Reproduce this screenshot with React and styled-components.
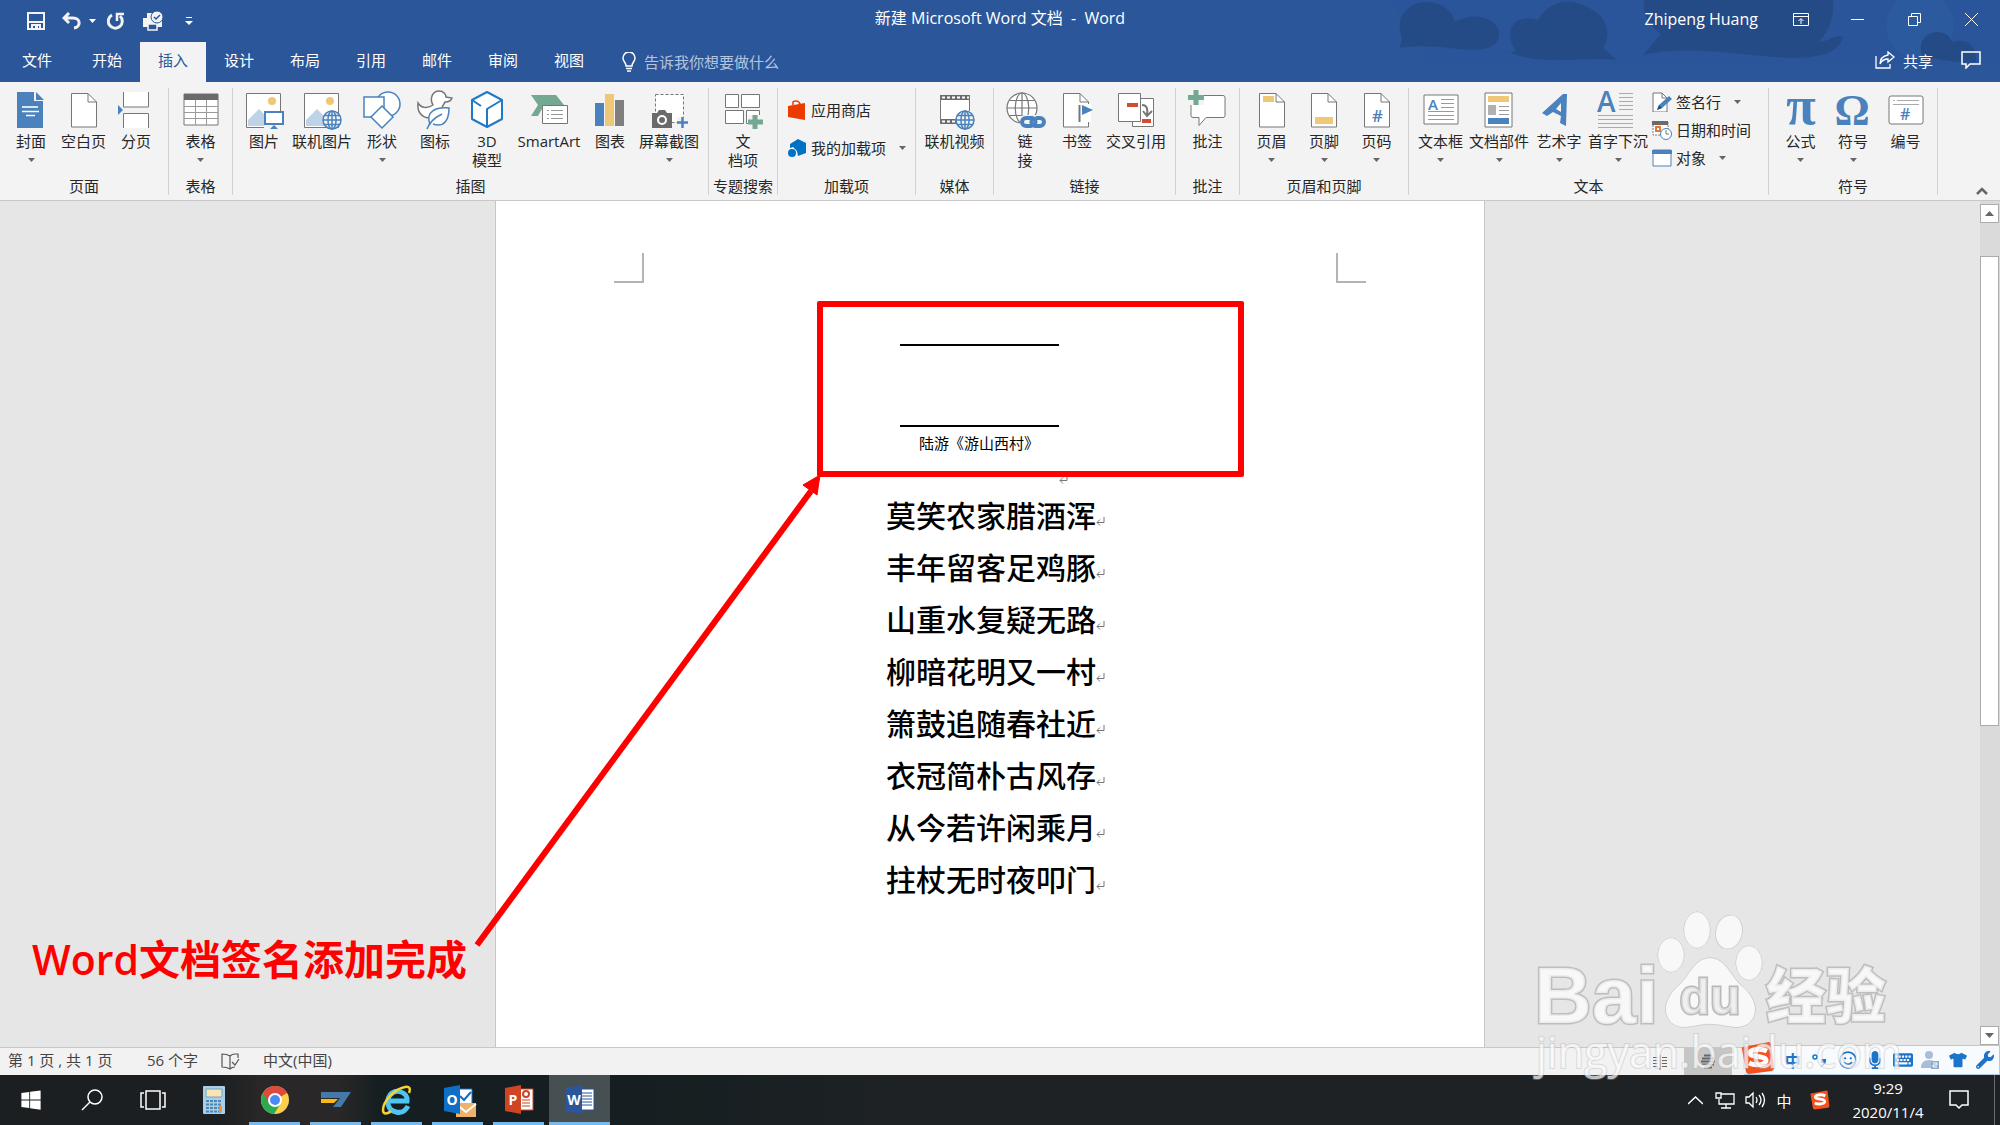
import React, { Component } from 'react'
import styled, { createGlobalStyle, css } from 'styled-components'
import { FaWindows, FaTshirt, FaWrench, FaMicrophone, FaRegSmile, FaKeyboard } from 'react-icons/fa'

const BLUE = '#2b579a'
const ICON_BLUE = '#4a82bd'
const GREY = '#767676'
const GREEN = '#74a892'
const SAND = '#efc877'

const GlobalStyle = createGlobalStyle`
  * { box-sizing: border-box; }

  body {
    margin: 0;
    font-family: 'Open Sans', 'Noto Sans CJK SC', sans-serif;
    font-size: 15px;
    color: #262626;
    background: #e6e6e6;
  }

  button, input {
    padding: 0;
    border: 0;
    background: none;
    color: inherit;
    font: inherit;
  }

  h1, p { margin: 0; }

  svg { display: block; flex: none; }
`

const Window = styled.div`
  position: relative;
  display: flex;
  flex-direction: column;
  min-height: 100vh;
  overflow: hidden;
`

/* title bar and tabs */

const Header = styled.header`
  position: relative;
  background: ${BLUE};
  color: white;
`

const Clouds = styled.svg`
  position: absolute;
  top: 0;
  right: 0;
`

const TitleBar = styled.div`
  position: relative;
  display: grid;
  grid-template-columns: 1fr auto 1fr;
  height: 42px;
`

const QuickAccess = styled.div`
  display: flex;
  align-items: center;
  gap: 8px;
  padding-left: 24px;
`

const QuickButton = styled.button`
  display: flex;
  align-items: center;
  justify-content: center;
  gap: 8px;
  height: 32px;
  min-width: 24px;
  margin-right: ${p => p.$space || 0}px;
`

const Title = styled.h1`
  font-size: 16px;
  font-weight: 400;
  line-height: 36px;
  white-space: pre;
`

const WindowControls = styled.div`
  display: flex;
  justify-content: flex-end;
  height: 38px;
`

const UserName = styled.button`
  margin-right: 14px;
  font-size: 16px;
  line-height: 36px;
`

const ControlButton = styled.button`
  display: flex;
  align-items: center;
  justify-content: center;
  width: 57px;
`

const TabBar = styled.nav`
  position: relative;
  display: flex;
  height: 40px;
`

const Tab = styled.button`
  height: 40px;
  width: ${p => p.$first ? 74 : 66}px;
  padding-bottom: 4px;
  line-height: 36px;

  ${p => p.$active && css`
    background: #f3f3f3;
    color: ${BLUE};
  `}
`

const TellMe = styled.label`
  display: flex;
  align-items: center;
  gap: 8px;
  margin-left: 20px;
`

const TellMeInput = styled.input`
  width: 200px;
  outline: none;

  &::placeholder {
    color: #b5c5df;
    opacity: 1;
  }
`

const ShareTools = styled.div`
  display: flex;
  align-items: center;
  gap: 28px;
  height: 36px;
  margin-left: auto;
  padding-right: 19px;
`

const ShareButton = styled.button`
  display: flex;
  align-items: center;
  gap: 8px;
`

/* ribbon */

const Ribbon = styled.section`
  position: relative;
  display: flex;
  padding: 6px 0 5px;
  border-bottom: 1px solid #c8c8c8;
  background: #f3f3f3;
`

const Group = styled.div`
  display: flex;
  flex-direction: column;
  width: ${p => p.$width}px;
  height: 107px;
  border-right: 1px solid #d2d2d2;
`

const GroupBody = styled.div`
  display: flex;
  height: 90px;
  padding-left: ${p => p.$center ? 0 : 5}px;
  justify-content: ${p => p.$center ? 'center' : 'flex-start'};
`

const GroupLabel = styled.span`
  line-height: 16px;
  text-align: center;
  white-space: nowrap;
`

const BigButton = styled.button`
  display: flex;
  flex-direction: column;
  align-items: center;
  width: ${p => p.$width}px;
  height: 86px;
  padding-top: 1px;
  white-space: pre;
  line-height: 19px;

  > svg:first-child { margin-bottom: 3px; overflow: visible; }
  > svg:last-child { margin-top: 7px; }
`

const SmallButtons = styled.div`
  display: flex;
  flex-direction: column;
  padding: ${p => p.$loose ? '7px 0 0 4px' : '0 0 0 3px'};
  gap: ${p => p.$loose ? 9 : 0}px;
`

const SmallButton = styled.button`
  display: flex;
  align-items: center;
  height: ${p => p.$loose ? 29 : 28}px;
  gap: 4px;
  white-space: nowrap;
  line-height: 20px;

  > svg:last-child { margin-left: 9px; }
`

const Collapse = styled.button`
  align-self: flex-end;
  margin: 0 12px 0 auto;
`

/* document */

const Workspace = styled.main`
  position: relative;
  display: flex;
  flex: 1;
`

const Canvas = styled.div`
  display: flex;
  flex: 1;
  justify-content: center;
`

const Page = styled.article`
  position: relative;
  width: 990px;
  border: solid #c6c6c6;
  border-width: 0 1px;
  background: white;
  color: black;
`

const Corners = styled.div`
  display: flex;
  justify-content: space-between;
  padding: 52px 118px 0;
`

const Corner = styled.div`
  width: 30px;
  height: 30px;
  border: solid #b4b4b4;
  border-width: ${p => p.$right ? '0 0 2px 2px' : '0 2px 2px 0'};
`

const PageText = styled.div`
  width: 218px;
  margin: 61px auto 0 390px;
`

const Signature = styled.div`
  display: flex;
  align-items: flex-end;
  height: 146px;
  margin-left: 14px;

  > svg { margin-bottom: 6px; }
`

const SignatureBox = styled.div`
  width: 159px;
  height: 146px;
  border-top: 2px solid black;
`

const Signer = styled.p`
  margin-top: 79px;
  padding-left: 19px;
  border-top: 2px solid black;
  line-height: 32px;
`

const Verse = styled.p`
  display: flex;
  align-items: center;
  font-size: 30px;
  font-weight: 500;
  line-height: 52px;
  white-space: nowrap;

  svg { margin-top: 10px; }
`

const RedBox = styled.div`
  position: absolute;
  top: 100px;
  left: 321px;
  width: 427px;
  height: 176px;
  border: 6px solid red;
  border-radius: 2px;
`

const Arrow = styled.svg`
  position: absolute;
  top: 270px;
  left: 470px;
`

const Caption = styled.p`
  position: absolute;
  top: 728px;
  left: 32px;
  color: red;
  font-size: 41px;
  font-weight: 600;
  line-height: 60px;
`

const ScrollBar = styled.div`
  display: flex;
  flex-direction: column;
  width: 20px;
  padding: 3px 1px 2px 0;
  background: #dadada;
`

const ScrollButton = styled.button`
  display: flex;
  align-items: center;
  justify-content: center;
  height: 19px;
  border: 1px solid #ababab;
  background: white;
`

const ScrollTrack = styled.div`
  flex: 1;
  padding-top: 33px;
`

const ScrollThumb = styled.div`
  height: 61%;
  border: 1px solid #ababab;
  background: white;
`

/* status bar and taskbar */

const StatusBar = styled.footer`
  position: relative;
  display: flex;
  align-items: center;
  gap: 23px;
  height: 28px;
  padding-left: 8px;
  border-top: 1px solid #c8c8c8;
  background: #f2f2f2;
  color: #444;
`

const StatusText = styled.span`
  height: 28px;
  line-height: 24px;
  min-width: ${p => p.$wide ? 116 : 0}px;
`

const Views = styled.div`
  display: flex;
  align-self: stretch;
  margin-left: auto;
  margin-right: 268px;
`

const ViewButton = styled.button`
  display: flex;
  align-items: center;
  justify-content: center;
  width: 48px;
  background: ${p => p.$active ? '#c6c6c6' : 'none'};
`

const ImeBar = styled.div`
  position: absolute;
  right: 0;
  bottom: 0;
  display: flex;
  align-items: center;
  width: 256px;
  height: 30px;
  padding-left: 35px;
  border: 1px solid #b0cbe6;
  border-left: 0;
  background: linear-gradient(90deg, transparent 16px, #f8fbfe 16px);
  color: #1b74c9;
`

const ImeLogo = styled.span`
  position: absolute;
  left: -3px;
  bottom: -1px;
`

const ImeButton = styled.button`
  display: flex;
  align-items: center;
  justify-content: center;
  flex: 1;
  font-weight: 700;
  font-size: 16px;
`

const TaskBar = styled.footer`
  display: flex;
  height: 50px;
  background: linear-gradient(90deg, #1c1f21 0, #1c1f21 220px, #292727 260px, #292727 340px, #151e21 380px, #151e21 620px, #1e2224 900px);
  color: white;
`

const Task = styled.button`
  position: relative;
  display: flex;
  align-items: center;
  justify-content: center;
  width: 61px;
  background: ${p => p.$active ? '#464f52' : 'none'};

  ${p => p.$open && css`
    &::after {
      content: '';
      position: absolute;
      right: ${p.$active ? 0 : 5}px;
      bottom: 0;
      left: ${p.$active ? 0 : 5}px;
      height: 3px;
      background: #76b9ed;
    }
  `}
`

const Tray = styled.div`
  display: flex;
  align-items: center;
  margin-left: auto;
  padding-right: 5px;
`

const TrayButton = styled.button`
  display: flex;
  justify-content: center;
  width: ${p => p.$width || 30}px;
`

const Clock = styled.button`
  width: 92px;
  line-height: 24px;
`

const ShowDesktop = styled.span`
  align-self: stretch;
  margin-left: 10px;
  border-left: 1px solid #6a6e70;
`

const Watermark = styled.svg`
  position: absolute;
  right: 90px;
  bottom: 30px;
  pointer-events: none;
`

/* drawings */

const Down = ({ color = '#666', size = 7 }) => (
  <svg width={size} height="4" viewBox="0 0 7 4"><path d="M0 0h7L3.5 4z" fill={color} /></svg>
)

const Sheet = ({ children, x = 7 }) => (
  <g transform={`translate(${x} 0)`}>
    <path d="M0.5 4.5h16.500l8.500 8.500v25h-25z" fill="white" stroke={GREY} />
    <path d="M17 4.500v8.500h8.500" fill="none" stroke={GREY} />
    {children}
  </g>
)

const Globe = ({ x, y, r, color, fill = '#f3f3f3', w = 1.500 }) => (
  <g transform={`translate(${x} ${y})`} fill="none" stroke={color} strokeWidth={w}>
    <circle r={r} fill={fill} />
    <ellipse rx={r * 0.45} ry={r} />
    <path d={`M${-r} 0H${r}M0 ${-r}V${r}M${-r * 0.85} ${-r * 0.5}H${r * 0.85}M${-r * 0.85} ${r * 0.5}H${r * 0.85}`} />
  </g>
)

const Picture = () => (
  <g>
    <path d="M2.500 4.500h34v34h-34z" fill="white" stroke={GREY} />
    <circle cx="28" cy="12" r="4" fill={SAND} />
    <path d="M4 37V31L15 20L22 27V37z" fill="#bfd3e8" />
  </g>
)

const icons = {
  cover: (
    <g>
      <path d="M6 3h17v9h9v27H6z" fill={ICON_BLUE} />
      <path d="M25 3l8 8h-8z" fill={ICON_BLUE} />
      <path d="M11 17l2 2 2-2 2 2 2-2 2 2 2-2 2 2 2-2M11 19l2-2 2 2 2-2 2 2 2-2 2 2 2-2 2 2" stroke="white" fill="none" strokeWidth="0.8" />
      <path d="M11 22.500h17M15 26.500h9" stroke="white" strokeWidth="1.500" />
    </g>
  ),
  blank: <Sheet />,
  pageBreak: (
    <g>
      <path d="M7 3h26v15H7zM7 24h26v15H7z" fill="white" />
      <path d="M7.500 3v15h25V3M7.500 39V24.500h25V39" fill="none" stroke={GREY} />
      <path d="M2 16l5 5-5 5z" fill={ICON_BLUE} />
    </g>
  ),
  table: (
    <g>
      <path d="M3 5h34v31H3z" fill="white" stroke={GREY} />
      <path d="M3 5h34v6H3z" fill="#6a6a6a" />
      <path d="M3 17.500h34M3 23.500h34M3 29.500h34M14.500 11v25M25.500 11v25" stroke="#9a9a9a" />
    </g>
  ),
  picture: (
    <g>
      <Picture />
      <path d="M20 22h20v18H20z" fill="#f3f3f3" />
      <path d="M21 23h18v12H21z" fill="white" stroke={ICON_BLUE} strokeWidth="2" />
      <path d="M26 40l4-4 4 4z" fill={ICON_BLUE} />
    </g>
  ),
  onlinePicture: <g><Picture /><Globe x={30} y={31} r={9} color={ICON_BLUE} /></g>,
  shapes: (
    <g fill="white" stroke={ICON_BLUE} strokeWidth="1.500">
      <circle cx="26" cy="15" r="12" />
      <path d="M2 8h20v20H2z" />
      <path d="M20 17l11 11-11 11L9 28z" />
    </g>
  ),
  duck: (
    <g fill="white" strokeWidth="1.500">
      <path d="M18 16c-4-7 0-14 6-14 5 0 7 4 7 6l6 1c-1 3-4 4-7 4-1 3-4 4-3 8 0 4-5 8-12 8C6 29 2 22 3 14c3 5 9 6 15 2z" stroke={GREY} />
      <path d="M15 36c-5-14 6-18 19-17 0 12-5 20-16 16" stroke={ICON_BLUE} />
      <path d="M12 40c2-6 7-11 15-15" fill="none" stroke={ICON_BLUE} />
    </g>
  ),
  cube: (
    <g fill="white" stroke="#1e7ac8" strokeWidth="2" strokeLinejoin="round">
      <path d="M20 3l15 8v19l-15 8-15-8V11z" />
      <path d="M20 38V20l15-9M5 11l9 6" fill="none" />
    </g>
  ),
  smartArt: (
    <g>
      <path d="M2 6h25l8 10H15L9 27H2l7-11z" fill={GREEN} />
      <path d="M13.500 16.500h25v18h-25z" fill="white" stroke={GREY} />
      <path d="M18 21.500h2M22 21.500h12M18 25.500h2M22 25.500h12M18 29.500h2M22 29.500h12" stroke="#999" />
    </g>
  ),
  chart: (
    <g>
      <path d="M5 14h9v23H5z" fill={ICON_BLUE} />
      <path d="M15 5h9v32h-9z" fill={SAND} />
      <path d="M25 11h9v26h-9z" fill="#7f7f7f" />
    </g>
  ),
  screenshot: (
    <g>
      <path d="M6.500 5.500h28v28h-28z" fill="white" stroke={GREY} strokeDasharray="3 2" />
      <path d="M3 24h5l2-3h6l2 3h5v15H3z" fill="#6a6a6a" />
      <circle cx="13" cy="31" r="4" fill="none" stroke="white" strokeWidth="2" />
      <path d="M28 28h11v11H28z" fill="#f3f3f3" />
      <path d="M33.500 28v11M28 33.500h11" stroke={ICON_BLUE} strokeWidth="2.500" />
    </g>
  ),
  docItem: (
    <g>
      <path d="M2.500 5.500h13v13h-13zM18.500 5.500h18v13h-18zM2.500 21.500h18v13h-18zM23.500 21.500h13v13h-13z" fill="white" stroke={GREY} />
      <path d="M25 26h15v14H25z" fill="#f3f3f3" />
      <path d="M32 26v14M25 33h15" stroke={GREEN} strokeWidth="5" />
    </g>
  ),
  onlineVideo: (
    <g>
      <path d="M5 6h30v29H5z" fill="white" />
      <path d="M5 6h30v5H5zM5 30h16v5H5z" fill="#6a6a6a" />
      <path d="M7 8.500h27M7 32.500h13" stroke="white" strokeWidth="2" strokeDasharray="3 2" />
      <path d="M5.500 6v29M34.500 6v16" stroke={GREY} />
      <Globe x={30} y={31} r={9} color={ICON_BLUE} />
    </g>
  ),
  link: (
    <g>
      <Globe x={17} y={19} r={15} color={GREY} fill="white" w={1.200} />
      <path d="M15 30q0-4 5-4h20v14H20q-5 0-5-5z" fill="#f3f3f3" />
      <g fill="none" stroke={ICON_BLUE} strokeWidth="4" strokeLinecap="round">
        <path d="M26 37h-5a4 4 0 0 1 0-8h6a4 4 0 0 1 3 6" />
        <path d="M32 29h3a4 4 0 0 1 0 8h-5a4 4 0 0 1-3-6" />
      </g>
    </g>
  ),
  bookmark: (
    <Sheet x={6}>
      <path d="M15 15h13v18H15z" fill="white" />
      <path d="M16.500 16v17" stroke={GREY} strokeWidth="2" />
      <path d="M19 16l11 5-11 5z" fill={ICON_BLUE} />
    </Sheet>
  ),
  crossRef: (
    <g>
      <path d="M16.500 9.500h21v28h-21z" fill="white" stroke={GREY} />
      <path d="M2.500 4.500h22v28h-22z" fill="white" stroke={GREY} />
      <path d="M11 14h11v4H11zM26 30h9v4h-9z" fill="#d24b33" />
      <path d="M26 16c5 0 6 4 5 10M27 22l4 5 5-5" fill="none" stroke={GREY} strokeWidth="2" />
    </g>
  ),
  comment: (
    <g>
      <path d="M6 6.500h29q2 0 2 2v18q0 2-2 2H18l-7 8v-8H5q-2 0-2-2v-18q0-2 3-2z" fill="white" stroke={GREY} />
      <path d="M0 1h16v15H0z" fill="#f3f3f3" />
      <path d="M8 1v15M0 8.500h16" stroke={GREEN} strokeWidth="5" />
    </g>
  ),
  pageHeader: <Sheet><path d="M4 7h11v6H4z" fill={SAND} /></Sheet>,
  pageFooter: <Sheet><path d="M4 28h18v7H4z" fill={SAND} /></Sheet>,
  pageNumber: <Sheet><text x="8" y="33" fontSize="17" fontWeight="600" fill={ICON_BLUE}>#</text></Sheet>,
  textBox: (
    <g>
      <path d="M3 6h34v29H3z" fill="white" stroke={GREY} />
      <text x="7" y="21" fontSize="15" fontWeight="600" fill={ICON_BLUE}>A</text>
      <path d="M20 10.500h13M20 14.500h13M20 18.500h13M7 22.500h26M7 26.500h26M7 30.500h26" stroke="#999" />
    </g>
  ),
  quickParts: (
    <g>
      <path d="M6 4h27v34H6z" fill="white" stroke={GREY} />
      <path d="M9 7h21v6H9z" fill={SAND} />
      <path d="M9 16h8v10H9z" fill="#b0b0b0" />
      <path d="M20 17.500h10M20 21.500h10M20 25.500h10" stroke="#999" />
      <path d="M9 29h21v6H9z" fill={ICON_BLUE} />
    </g>
  ),
  wordArt: (
    <path d="M3 24L24 5h4l-1 32-6-3 1-7-8-4-6 4zM17 20l5 3V14z" fill={ICON_BLUE} fillRule="evenodd" />
  ),
  dropCap: (
    <g>
      <text x="-1" y="23" fontSize="28" fontWeight="600" fill={ICON_BLUE}>A</text>
      <path d="M21 4.500h14M21 8.500h14M21 12.500h14M21 16.500h14M21 20.500h14M0 26.500h35M0 30.500h35M0 34.500h35M0 38.500h35" stroke="#aaa" />
    </g>
  ),
  pi: <text x="20" y="35" fontSize="54" fontWeight="700" textAnchor="middle" fontFamily="Liberation Serif" fill={ICON_BLUE}>π</text>,
  omega: <text x="19" y="36" fontSize="44" fontWeight="700" textAnchor="middle" fontFamily="Liberation Serif" fill={ICON_BLUE}>Ω</text>,
  numbering: (
    <g>
      <rect x="3" y="7" width="34" height="28" rx="2" fill="white" stroke={GREY} />
      <path d="M7 11.500h2M11 11.500h22M7 15.500h26" stroke="#aaa" />
      <text x="14" y="31" fontSize="16" fontWeight="600" fill={ICON_BLUE}>#</text>
    </g>
  ),
}

const smallIcons = {
  store: (
    <g>
      <path d="M6 5V2q0-1 3-1t4 3v2" fill="none" stroke="#eb3c00" strokeWidth="1.500" />
      <path d="M1 6l17-3v17L1 17z" fill="#eb3c00" />
    </g>
  ),
  addIns: (
    <g fill="#0072c6">
      <path d="M3 6l8-5 8 4v10l-8 3-1-5-4-4-3 1z" />
      <circle cx="5" cy="15" r="4" />
    </g>
  ),
  signature: (
    <g>
      <path d="M1 1h9l5 5v14H1z" fill="white" stroke={GREY} />
      <path d="M10 1v5h5" fill="none" stroke={GREY} />
      <path d="M5 18l2-5L17 4l3 3-10 9z" fill={ICON_BLUE} />
      <path d="M5 18l5-2-3-3z" fill="#1f4e79" />
    </g>
  ),
  dateTime: (
    <g>
      <path d="M1 2h15v13H1z" fill="white" stroke={GREY} strokeDasharray="2 1" />
      <path d="M0 1h16v4H0z" fill="#6a6a6a" />
      <path d="M4 7h4v4H4z" fill="none" stroke="#e8762c" strokeWidth="2" />
      <circle cx="14" cy="14" r="5.500" fill="white" stroke={ICON_BLUE} />
      <path d="M14 10v4h3" fill="none" stroke={GREY} />
    </g>
  ),
  object: (
    <g>
      <path d="M1 2h18v16H1z" fill="white" stroke={ICON_BLUE} />
      <path d="M0 2h20v4H0z" fill={ICON_BLUE} />
    </g>
  ),
}

const Return = () => (
  <svg width="9" height="9" viewBox="0 0 9 9" fill="none" stroke="#777"><path d="M8 0v5.500H1M4 2.500L1 5.500l3 3" /></svg>
)

const Sogou = ({ size }) => (
  <svg width={size} height={size} viewBox="0 0 34 34">
    <path d="M2 6L28 1q2 0 2 2l3 24q0 2-2 3L8 33q-2 0-3-2L1 8q-1-2 1-2z" fill="#f4511e" />
    <path d="M26 10c-6-3-17-2-17 2 0 5 17 2 16 8-1 4-11 5-17 2" fill="none" stroke="white" strokeWidth="5" />
  </svg>
)

const Chrome = () => (
  <svg width="28" height="28" viewBox="0 0 28 28">
    <circle cx="14" cy="14" r="14" fill="#fcd04b" />
    <path d="M14 14L1.900 7A14 14 0 0 1 26.100 7z" fill="#dd4b3e" />
    <path d="M14 14L1.900 7A14 14 0 0 0 13 28L20 17z" fill="#2da94f" />
    <path d="M14 7h12.100A14 14 0 0 0 2 7l6 10z" fill="#dd4b3e" />
    <circle cx="14" cy="14" r="7" fill="white" />
    <circle cx="14" cy="14" r="5" fill="#4a8af4" />
  </svg>
)

const OfficeIcon = ({ letter, color, children }) => (
  <svg width="30" height="30" viewBox="0 0 30 30" overflow="visible">
    <path d="M14 4h15v21H14z" fill="white" stroke={color} />
    {children}
    <path d="M1 3l16-3v29L1 26z" fill={color} />
    <text x="9" y="20" fontSize="14" fontWeight="700" textAnchor="middle" fill="white">{letter}</text>
  </svg>
)

const groups = [
  { label: '页面', width: 169, items: [
    { icon: 'cover', text: '封面', width: 52, menu: true },
    { icon: 'blank', text: '空白页', width: 53 },
    { icon: 'pageBreak', text: '分页', width: 52 },
  ] },
  { label: '表格', width: 64, center: true, items: [{ icon: 'table', text: '表格', width: 52, menu: true }] },
  { label: '插图', width: 476, items: [
    { icon: 'picture', text: '图片', width: 52 },
    { icon: 'onlinePicture', text: '联机图片', width: 64 },
    { icon: 'shapes', text: '形状', width: 56, menu: true },
    { icon: 'duck', text: '图标', width: 50 },
    { icon: 'cube', text: '3D\n模型', width: 54 },
    { icon: 'smartArt', text: 'SmartArt', width: 70 },
    { icon: 'chart', text: '图表', width: 52 },
    { icon: 'screenshot', text: '屏幕截图', width: 66, menu: true },
  ] },
  { label: '专题搜索', width: 69, center: true, items: [{ icon: 'docItem', text: '文\n档项', width: 64 }] },
  { label: '加载项', width: 138, loose: true, small: [
    { icon: 'store', text: '应用商店' },
    { icon: 'addIns', text: '我的加载项', menu: true },
  ] },
  { label: '媒体', width: 78, center: true, items: [{ icon: 'onlineVideo', text: '联机视频', width: 66 }] },
  { label: '链接', width: 182, items: [
    { icon: 'link', text: '链\n接', width: 52 },
    { icon: 'bookmark', text: '书签', width: 52 },
    { icon: 'crossRef', text: '交叉引用', width: 66 },
  ] },
  { label: '批注', width: 64, center: true, items: [{ icon: 'comment', text: '批注', width: 52 }] },
  { label: '页眉和页脚', width: 169, items: [
    { icon: 'pageHeader', text: '页眉', width: 53, menu: true },
    { icon: 'pageFooter', text: '页脚', width: 52, menu: true },
    { icon: 'pageNumber', text: '页码', width: 53, menu: true },
  ] },
  { label: '文本', width: 360, items: [
    { icon: 'textBox', text: '文本框', width: 53, menu: true },
    { icon: 'quickParts', text: '文档部件', width: 64, menu: true },
    { icon: 'wordArt', text: '艺术字', width: 56, menu: true },
    { icon: 'dropCap', text: '首字下沉', width: 62, menu: true },
  ], small: [
    { icon: 'signature', text: '签名行', menu: true },
    { icon: 'dateTime', text: '日期和时间' },
    { icon: 'object', text: '对象', menu: true },
  ] },
  { label: '符号', width: 169, items: [
    { icon: 'pi', text: '公式', width: 53, menu: true },
    { icon: 'omega', text: '符号', width: 52, menu: true },
    { icon: 'numbering', text: '编号', width: 53 },
  ] },
]

const tabs = ['文件', '开始', '插入', '设计', '布局', '引用', '邮件', '审阅', '视图']

const verses = [
  '莫笑农家腊酒浑',
  '丰年留客足鸡豚',
  '山重水复疑无路',
  '柳暗花明又一村',
  '箫鼓追随春社近',
  '衣冠简朴古风存',
  '从今若许闲乘月',
  '拄杖无时夜叩门',
]

const RibbonGroup = ({ group }) => (
  <Group $width={group.width}>
    <GroupBody $center={group.center}>
      {(group.items || []).map(item => (
        <BigButton key={item.icon} $width={item.width}>
          <svg width="40" height="40" viewBox="0 0 40 40">{icons[item.icon]}</svg>
          <span>{item.text}</span>
          {item.menu ? <Down /> : null}
        </BigButton>
      ))}
      {group.small ? (
        <SmallButtons $loose={group.loose}>
          {group.small.map(item => (
            <SmallButton key={item.icon} $loose={group.loose}>
              <svg width="20" height="20" viewBox="0 0 20 20">{smallIcons[item.icon]}</svg>
              <span>{item.text}</span>
              {item.menu ? <Down /> : null}
            </SmallButton>
          ))}
        </SmallButtons>
      ) : null}
    </GroupBody>
    <GroupLabel>{group.label}</GroupLabel>
  </Group>
)

class App extends Component {

  state = {
    tab: '插入',
  }

  renderHeader() {
    const { tab } = this.state

    return (
      <Header>
        <Clouds width="610" height="64" viewBox="0 0 610 64" fill="#254b86">
          <path d="M0 0h610v64H40z" fill="#29549a" opacity="0.5" />
          <path d="M9 48c3-6 3-9 2-13C5 15 20 2 36 2c16 0 26 8 29 20 14-8 33-8 43 6 4 10-2 17-10 20-25 6-50-6-89 0z" />
          <path d="M116 50c4 4 10 1 10 1-14-20-2-38 22-31C160 0 180-2 195 6c28 12 24 32 18 42l14 12c-35-4-80 8-111-10z" />
          <path d="M254 0h189c1 20-4 30-14 42 10 0 14-8 24-5-4 18-30 21-50 21-50-2-105-14-150-3l18-21c-15-12-18-20-17-34z" />
          <circle cx="530" cy="26" r="34" fill="#2c5a9f" />
          <path d="M534 58c-8-12 0-26 13-26 10 0 14 6 15 10 14-4 25 2 24 20-20 2-36-4-52-4z" />
        </Clouds>
        <TitleBar>
          <QuickAccess>
            <QuickButton aria-label="保存" $space={6}>
              <svg width="18" height="18" viewBox="0 0 18 18" fill="none" stroke="#f3f3f3" strokeWidth="2">
                <path d="M1 1h16v16H1z" /><path d="M1 10h16M5 17v-4h8v4" /><path d="M8 13h3v4H8z" fill="#f3f3f3" stroke="none" />
              </svg>
            </QuickButton>
            <QuickButton aria-label="撤消">
              <svg width="19" height="18" viewBox="0 0 19 18" fill="none" stroke="#f3f3f3" strokeWidth="3">
                <path d="M7 1L2 6l5 5M2 6h9c8 0 8 9 1 10" />
              </svg>
              <Down color="white" />
            </QuickButton>
            <QuickButton aria-label="重复" $space={5}>
              <svg width="18" height="18" viewBox="0 0 18 18" fill="none" stroke="#f3f3f3" strokeWidth="3">
                <path d="M5 3a7 7 0 1 0 8 1" /><path d="M10 9V2h7" strokeWidth="2.500" />
              </svg>
            </QuickButton>
            <QuickButton aria-label="打印预览" $space={4}>
              <svg width="22" height="20" viewBox="0 0 22 20">
                <path d="M1 7h19v9H1zM5 2h6v5H5z" fill="#f3f3f3" />
                <path d="M6 13h9v6H6z" fill={BLUE} stroke="#f3f3f3" strokeWidth="1.500" />
                <circle cx="15" cy="6" r="6" fill="#f3f3f3" stroke={BLUE} />
                <path d="M12 6l2 2 4-4" fill="none" stroke={BLUE} strokeWidth="1.500" />
              </svg>
            </QuickButton>
            <QuickButton aria-label="自定义快速访问工具栏">
              <svg width="8" height="8" viewBox="0 0 8 8" fill="white"><path d="M1 0h6v1H1zM0 4h8L4 8z" /></svg>
            </QuickButton>
          </QuickAccess>
          <Title>{'新建 Microsoft Word 文档  -  Word'}</Title>
          <WindowControls>
            <UserName>Zhipeng Huang</UserName>
            <ControlButton aria-label="功能区显示选项">
              <svg width="16" height="13" viewBox="0 0 16 13" fill="none" stroke="white">
                <path d="M.5.5h15v12H.5zM.5 3.500h15M8 11V6M5.500 8L8 5.500 10.500 8" />
              </svg>
            </ControlButton>
            <ControlButton aria-label="最小化">
              <svg width="13" height="13" viewBox="0 0 13 13"><path d="M0 6.500h13" stroke="white" /></svg>
            </ControlButton>
            <ControlButton aria-label="还原">
              <svg width="13" height="13" viewBox="0 0 13 13" fill="none" stroke="white">
                <path d="M.5 3.500h9v9h-9zM3.500 3V.5h9v9H10" />
              </svg>
            </ControlButton>
            <ControlButton aria-label="关闭">
              <svg width="13" height="13" viewBox="0 0 13 13"><path d="M0 0l13 13M13 0L0 13" stroke="white" /></svg>
            </ControlButton>
          </WindowControls>
        </TitleBar>
        <TabBar>
          {tabs.map((name, index) => (
            <Tab
              key={name}
              $first={index === 0}
              $active={name === tab}
              onClick={e => this.setState({ tab: name })}
            >{name}</Tab>
          ))}
          <TellMe>
            <svg width="14" height="20" viewBox="0 0 14 20" fill="none" stroke="white" strokeWidth="1.500">
              <path d="M4 14c0-4-3-4-3-8a6 6 0 0 1 12 0c0 4-3 4-3 8zM4 16.500h6M5 19h4" />
            </svg>
            <TellMeInput aria-label="告诉我你想要做什么" placeholder="告诉我你想要做什么" />
          </TellMe>
          <ShareTools>
            <ShareButton>
              <svg width="20" height="18" viewBox="0 0 20 18" fill="none" stroke="white" strokeWidth="1.300">
                <path d="M1 5v12h14v-4" /><path d="M13 1l6 5-6 5V8c-4 0-6 1-8 5 0-5 3-8 8-9z" />
              </svg>
              共享
            </ShareButton>
            <ShareButton aria-label="批注">
              <svg width="20" height="18" viewBox="0 0 20 18" fill="none" stroke="white" strokeWidth="1.500">
                <path d="M1 1h18v12H9l-4 4v-4H1z" />
              </svg>
            </ShareButton>
          </ShareTools>
        </TabBar>
      </Header>
    )
  }

  renderTaskBar() {
    return (
      <TaskBar>
        <Task aria-label="开始"><FaWindows size={22} /></Task>
        <Task aria-label="搜索">
          <svg width="22" height="22" viewBox="0 0 22 22" fill="none" stroke="white" strokeWidth="1.500">
            <circle cx="14" cy="8" r="7" /><path d="M9 13l-8 8" />
          </svg>
        </Task>
        <Task aria-label="任务视图">
          <svg width="26" height="20" viewBox="0 0 26 20" fill="none" stroke="white" strokeWidth="1.500">
            <path d="M6 1h14v18H6zM4 3H1v14h3M22 3h3v14h-3" />
          </svg>
        </Task>
        <Task aria-label="计算器">
          <svg width="22" height="28" viewBox="0 0 22 28">
            <rect width="22" height="28" rx="1" fill="#a9cfe8" />
            <path d="M3 3h16v8H3z" fill="#fbe3b4" stroke="#6fa4c8" />
            <path d="M3 15h15M3 18.500h15M3 22h15M3 25.500h15" stroke="#4b86b4" strokeWidth="2" strokeDasharray="3 1" />
            <path d="M16 20h3v6h-3z" fill="#f0932b" />
          </svg>
        </Task>
        <Task $open aria-label="Chrome"><Chrome /></Task>
        <Task $open aria-label="SecureCRT">
          <svg width="30" height="16" viewBox="0 0 30 16">
            <path d="M0 0h30L20 15h-8l7-9H0z" fill="#4579a8" /><path d="M0 7h17l-4 4H0z" fill="#fdb913" />
          </svg>
        </Task>
        <Task $open aria-label="Internet Explorer">
          <svg width="32" height="30" viewBox="0 0 32 30" fill="none">
            <path d="M27 21c-3 6-8 7-12 6-9-2-10-12-6-17 6-7 18-3 17 6H9" stroke="#4fc3f1" strokeWidth="5" />
            <path d="M28 8c2-5 0-7-4-6C14 4 2 16 2 25c0 5 5 4 8 1" stroke="#f9d232" strokeWidth="2.500" />
          </svg>
        </Task>
        <Task $open aria-label="Outlook">
          <OfficeIcon letter="O" color="#0f6fc6">
            <path d="M17 11l4 4 7-8" fill="none" stroke="#0f6fc6" strokeWidth="2" />
            <path d="M13 18h20v14H13z" fill="#eeb26b" /><path d="M13 19l10 8 10-8" fill="none" stroke="white" strokeWidth="2" />
          </OfficeIcon>
        </Task>
        <Task $open aria-label="PowerPoint">
          <OfficeIcon letter="P" color="#d04424">
            <path d="M18 15h8M18 18h8M18 21h8" stroke="#d04424" /><circle cx="22" cy="9" r="3" fill="none" stroke="#d04424" strokeWidth="2" />
          </OfficeIcon>
        </Task>
        <Task $open $active aria-label="Word">
          <OfficeIcon letter="W" color={BLUE}>
            <path d="M17 8h10M17 11h10M17 14h10M17 17h10M17 20h10" stroke={BLUE} />
          </OfficeIcon>
        </Task>
        <Tray>
          <TrayButton aria-label="显示隐藏的图标">
            <svg width="15" height="9" viewBox="0 0 15 9" fill="none" stroke="white" strokeWidth="1.500"><path d="M0 8l7.500-7L15 8" /></svg>
          </TrayButton>
          <TrayButton aria-label="网络">
            <svg width="20" height="18" viewBox="0 0 20 18" fill="none" stroke="white" strokeWidth="1.300">
              <path d="M6 3h13v10H4V8M1 2h5v5H1zM11 13v4M6 17h10" />
            </svg>
          </TrayButton>
          <TrayButton aria-label="音量">
            <svg width="21" height="18" viewBox="0 0 21 18" fill="none" stroke="white" strokeWidth="1.300">
              <path d="M1 6h3l4-4v14l-4-4H1zM11 6q2 3 0 6M14 4q4 5 0 10M17 2q5 7 0 14" />
            </svg>
          </TrayButton>
          <TrayButton $width={28}>中</TrayButton>
          <TrayButton $width={44} aria-label="搜狗输入法"><Sogou size={20} /></TrayButton>
          <Clock>9:29<br />2020/11/4</Clock>
          <TrayButton $width={50} aria-label="通知">
            <svg width="20" height="20" viewBox="0 0 20 20" fill="none" stroke="white" strokeWidth="1.500">
              <path d="M1 1h18v14h-6l-3 3-3-3H1z" />
            </svg>
          </TrayButton>
          <ShowDesktop />
        </Tray>
      </TaskBar>
    )
  }

  render() {
    return (
      <Window>
        <GlobalStyle />
        {this.renderHeader()}
        <Ribbon>
          {groups.map(group => <RibbonGroup key={group.label} group={group} />)}
          <Collapse aria-label="折叠功能区">
            <svg width="12" height="8" viewBox="0 0 12 8" fill="none" stroke="#666" strokeWidth="2.500"><path d="M1 7l5-5 5 5" /></svg>
          </Collapse>
        </Ribbon>

        <Workspace>
          <Canvas>
            <Page>
              <Corners><Corner /><Corner $right /></Corners>
              <PageText>
                <Signature>
                  <SignatureBox>
                    <Signer>陆游《游山西村》</Signer>
                  </SignatureBox>
                  <Return />
                </Signature>
                {verses.map(verse => <Verse key={verse}>{verse}<Return /></Verse>)}
              </PageText>
              <RedBox />
            </Page>
          </Canvas>
          <ScrollBar>
            <ScrollButton aria-label="向上"><svg width="9" height="5" viewBox="0 0 9 5"><path d="M0 5h9L4.500 0z" fill="#666" /></svg></ScrollButton>
            <ScrollTrack><ScrollThumb /></ScrollTrack>
            <ScrollButton aria-label="向下"><svg width="9" height="5" viewBox="0 0 9 5"><path d="M0 0h9L4.500 5z" fill="#666" /></svg></ScrollButton>
          </ScrollBar>
          <Arrow width="356" height="480" viewBox="0 0 356 480">
            <path d="M7 474L341 20" stroke="red" strokeWidth="6" />
            <path d="M350 4l-3 20-14-10z" fill="red" stroke="red" strokeWidth="1" />
          </Arrow>
          <Caption>Word文档签名添加完成</Caption>
        </Workspace>

        <StatusBar>
          <StatusText $wide>第 1 页 , 共 1 页</StatusText>
          <StatusText>56 个字</StatusText>
          <svg width="19" height="17" viewBox="0 0 19 17" fill="none" stroke="#555" strokeWidth="1.200">
            <path d="M9 15V3Q6 1 1 1v13q5 0 8 2 2-2 5-2M9 3q2-2 5-2h3v4M11 9l3 3 4-6" />
          </svg>
          <StatusText>中文(中国)</StatusText>
          <Views>
            <ViewButton aria-label="阅读视图">
              <svg width="16" height="16" viewBox="0 0 16 16" stroke="#666"><path d="M1 3.500h5M1 6.500h5M1 9.500h5M1 12.500h5M10 3.500h5M10 6.500h5M10 9.500h5M10 12.500h5M8 1v15" /></svg>
            </ViewButton>
            <ViewButton $active aria-label="页面视图">
              <svg width="16" height="16" viewBox="0 0 16 16" stroke="#666"><path d="M4 1.500h8M2 4.500h12M1 7.500h14M2 10.500h12M4 13.500h8" strokeWidth="2" /></svg>
            </ViewButton>
          </Views>
          <ImeBar>
            <ImeLogo><Sogou size={34} /></ImeLogo>
            <ImeButton>中</ImeButton>
            <ImeButton aria-label="标点">
              <svg width="16" height="14" viewBox="0 0 16 14"><circle cx="3" cy="4" r="2" fill="none" stroke="#1b74c9" strokeWidth="1.500" /><path d="M9 6h5q1 5-5 8l2-4H9z" fill="#1b74c9" /></svg>
            </ImeButton>
            <ImeButton aria-label="表情"><FaRegSmile size={18} /></ImeButton>
            <ImeButton aria-label="语音"><FaMicrophone size={18} /></ImeButton>
            <ImeButton aria-label="软键盘"><FaKeyboard size={20} /></ImeButton>
            <ImeButton aria-label="账户">
              <svg width="18" height="18" viewBox="0 0 18 18" fill="#a9bcd8">
                <circle cx="8" cy="4" r="4" /><path d="M0 17q0-8 8-8t8 8z" /><path d="M10 10h8v8h-8z" fill="#8fa9cf" /><path d="M12 12h4v2h-4v2h4" fill="none" stroke="white" />
              </svg>
            </ImeButton>
            <ImeButton aria-label="皮肤"><FaTshirt size={18} /></ImeButton>
            <ImeButton aria-label="工具"><FaWrench size={18} /></ImeButton>
          </ImeBar>
        </StatusBar>
        {this.renderTaskBar()}

        <Watermark width="380" height="190" viewBox="0 0 380 190" fill="white" fillOpacity="0.7" stroke="#b4b4b4" strokeOpacity="0.8" paintOrder="stroke" fontFamily="Liberation Sans, Noto Sans CJK SC">
          <text x="4" y="118" fontSize="80" fontWeight="700" strokeWidth="3">Bai</text>
          <ellipse cx="141" cy="50" rx="13" ry="17" />
          <ellipse cx="167" cy="25" rx="13" ry="18" />
          <ellipse cx="199" cy="27" rx="13" ry="17" transform="rotate(12 199 27)" />
          <ellipse cx="219" cy="58" rx="13" ry="17" />
          <path d="M180 53c16 0 20 18 32 28 17 15 16 30 6 38-12 7-24 0-38 0s-26 7-37 0c-10-8-11-23 5-38 12-10 16-28 32-28z" />
          <text x="180" y="109" fontSize="50" textAnchor="middle" fontWeight="700" fill="#ececec" stroke="#aaa" strokeWidth="3">du</text>
          <text x="236" y="113" fontSize="60" fontWeight="900" strokeWidth="3">经验</text>
          <text x="6" y="163" fontSize="43" fontFamily="Open Sans" strokeWidth="2" strokeOpacity="0.4">jingyan.baidu.com</text>
        </Watermark>
      </Window>
    )
  }
}

export default App
